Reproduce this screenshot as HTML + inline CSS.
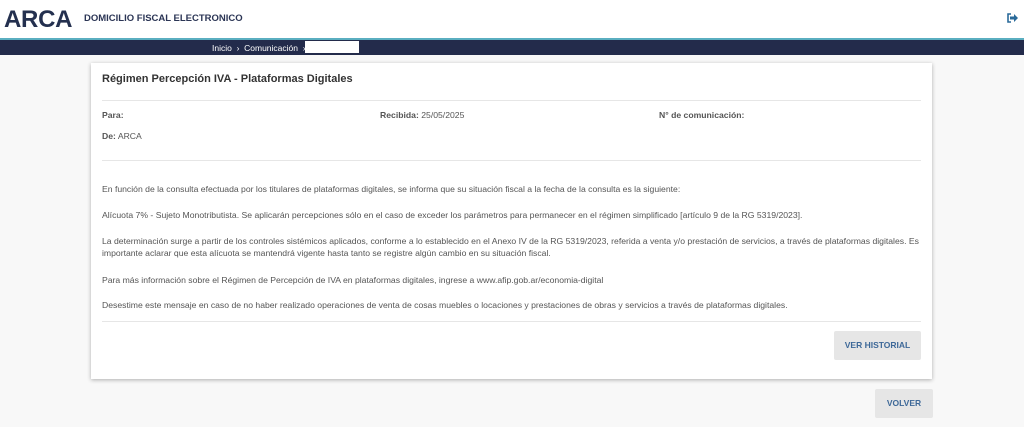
<!DOCTYPE html><html><head><style>
body{margin:0;width:1024px;height:427px;background:#f8f8f8;font-family:"Liberation Sans",sans-serif;overflow:hidden;position:relative;color:#444}
.hdr{position:absolute;top:0;left:0;width:1024px;height:38px;background:#fff}
.logo{position:absolute;left:4px;top:6px;font-size:24px;font-weight:bold;color:#24304f;letter-spacing:-0.3px}
.sub{position:absolute;left:84px;top:13px;font-size:9.5px;color:#2b3555;font-weight:bold}
.tl{position:absolute;top:38px;left:0;width:1024px;height:2px;background:#5aaec0}
.nav{position:absolute;top:40px;left:0;width:1024px;height:15px;background:#232b4b;color:#fff;font-size:8.5px}
.nav span{position:absolute;top:3px}
.box{position:absolute;left:305px;top:1px;width:54px;height:12px;background:#fff}
.card{position:absolute;left:91px;top:63px;width:841px;height:316px;background:#fff;box-shadow:0 1px 4px rgba(0,0,0,.3)}
.t{position:absolute;font-size:8.65px;color:#555;white-space:nowrap}
.hr{position:absolute;left:11px;width:819px;height:1px;background:#e6e6e6}
.btn{position:absolute;background:#e6e6e6;color:#3d6898;font-weight:bold;font-size:8.5px;text-align:center;border-radius:2px}
</style></head><body>
<div class="hdr"><div class="logo">ARCA</div><div class="sub">DOMICILIO FISCAL ELECTRONICO</div>
<svg style="position:absolute;left:1007px;top:13px" width="11" height="10" viewBox="0 0 11 10"><path d="M4 1H1v8h3" fill="none" stroke="#2a6a9a" stroke-width="1.6"/><path d="M3 3.5h4V1l4 4-4 4V6.5H3z" fill="#2a6a9a"/></svg></div>
<div class="tl"></div>
<div class="nav"><span style="left:212px">Inicio &nbsp;›&nbsp; Comunicación &nbsp;›</span><div class="box"></div></div>
<div class="card">
<div class="t" style="left:11px;top:10px;font-size:11px;font-weight:bold;color:#333">Régimen Percepción IVA - Plataformas Digitales</div>
<div class="hr" style="top:37px"></div>
<div class="t" style="left:11px;top:47px"><b>Para:</b></div>
<div class="t" style="left:289px;top:47px"><b>Recibida:</b> 25/05/2025</div>
<div class="t" style="left:568px;top:47px"><b>N° de comunicación:</b></div>
<div class="t" style="left:11px;top:68px"><b>De:</b> ARCA</div>
<div class="hr" style="top:97px"></div>
<div class="t" style="left:11px;top:121px">En función de la consulta efectuada por los titulares de plataformas digitales, se informa que su situación fiscal a la fecha de la consulta es la siguiente:</div>
<div class="t" style="left:11px;top:147px">Alícuota 7% - Sujeto Monotributista. Se aplicarán percepciones sólo en el caso de exceder los parámetros para permanecer en el régimen simplificado [artículo 9 de la RG 5319/2023].</div>
<div class="t" style="left:11px;top:173px">La determinación surge a partir de los controles sistémicos aplicados, conforme a lo establecido en el Anexo IV de la RG 5319/2023, referida a venta y/o prestación de servicios, a través de plataformas digitales. Es</div>
<div class="t" style="left:11px;top:185px">importante aclarar que esta alícuota se mantendrá vigente hasta tanto se registre algún cambio en su situación fiscal.</div>
<div class="t" style="left:11px;top:212px">Para más información sobre el Régimen de Percepción de IVA en plataformas digitales, ingrese a www.afip.gob.ar/economia-digital</div>
<div class="t" style="left:11px;top:237px">Desestime este mensaje en caso de no haber realizado operaciones de venta de cosas muebles o locaciones y prestaciones de obras y servicios a través de plataformas digitales.</div>
<div class="hr" style="top:258px"></div>
<div class="btn" style="left:743px;top:268px;width:87px;height:29px;line-height:29px">VER HISTORIAL</div>
</div>
<div class="btn" style="left:875px;top:389px;width:58px;height:29px;line-height:29px">VOLVER</div>
</body></html>
